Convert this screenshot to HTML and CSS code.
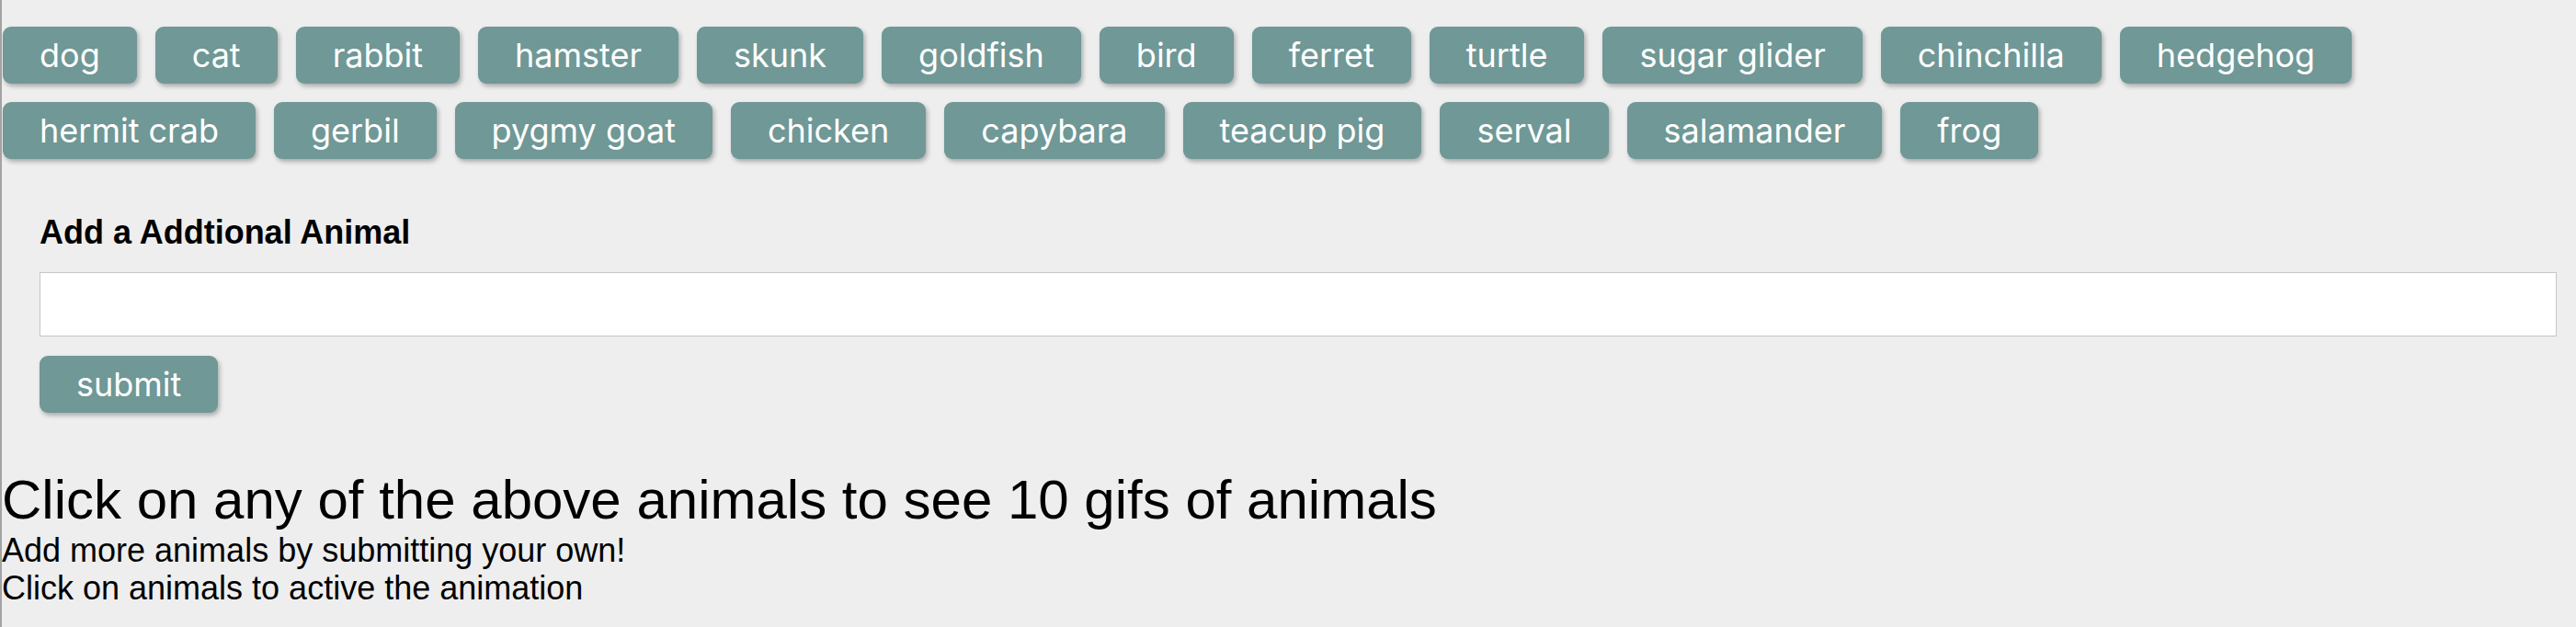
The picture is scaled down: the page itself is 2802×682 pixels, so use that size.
FILE: index.html
```html
<!DOCTYPE html>
<html lang="en">
<head>
<meta charset="utf-8">
<title>Animal Gifs</title>
<link rel="stylesheet" href="styles.css">
</head>
<body>
  <div class="animal-buttons">
    <button class="animal-btn">dog</button>
    <button class="animal-btn">cat</button>
    <button class="animal-btn">rabbit</button>
    <button class="animal-btn">hamster</button>
    <button class="animal-btn">skunk</button>
    <button class="animal-btn">goldfish</button>
    <button class="animal-btn">bird</button>
    <button class="animal-btn">ferret</button>
    <button class="animal-btn">turtle</button>
    <button class="animal-btn">sugar glider</button>
    <button class="animal-btn">chinchilla</button>
    <button class="animal-btn">hedgehog</button>
    <button class="animal-btn">hermit crab</button>
    <button class="animal-btn">gerbil</button>
    <button class="animal-btn">pygmy goat</button>
    <button class="animal-btn">chicken</button>
    <button class="animal-btn">capybara</button>
    <button class="animal-btn">teacup pig</button>
    <button class="animal-btn">serval</button>
    <button class="animal-btn">salamander</button>
    <button class="animal-btn">frog</button>
  </div>

  <form class="add-form">
    <label class="add-label" for="animal-input">Add a Addtional Animal</label>
    <input class="add-input" id="animal-input" type="text">
    <button class="animal-btn submit-btn" type="button">submit</button>
  </form>

  <h1 class="intro-title">Click on any of the above animals to see 10 gifs of animals</h1>
  <p class="intro-text">Add more animals by submitting your own!</p>
  <p class="intro-text">Click on animals to active the animation</p>
</body>
</html>
```

FILE: styles.css
```css
html, body {
  margin: 0;
  padding: 0;
}

body {
  background: #eeeeee;
  border-left: 2px solid #a3a3a3;
  min-height: 682px;
  box-sizing: border-box;
  font-family: "Liberation Sans", Arial, sans-serif;
  color: #000;
}

.animal-buttons {
  display: flex;
  flex-wrap: wrap;
  gap: 20px;
  padding: 29px 0 0 1px;
}

.animal-btn {
  font-family: Inter, "Noto Sans", sans-serif;
  font-size: 36px;
  line-height: 44px;
  color: #ffffff;
  background: #6f9896;
  border: none;
  border-radius: 9px;
  padding: 9px 40px;
  box-shadow: 2px 3px 5px rgba(0, 0, 0, 0.28);
  cursor: pointer;
}

.add-form {
  display: flex;
  flex-direction: column;
  align-items: flex-start;
  margin: 59px 21px 0 41px;
}

.add-label {
  font-weight: bold;
  font-size: 36px;
  line-height: 41px;
  margin-bottom: 23px;
}

.add-input {
  align-self: stretch;
  height: 70px;
  box-sizing: border-box;
  border: 1px solid #c6c6c6;
  background: #ffffff;
  margin: 0 0 21px 0;
  font-size: 36px;
}

.intro-title {
  font-weight: normal;
  font-size: 60px;
  line-height: 69px;
  margin: 60px 0 0 0;
}

.intro-text {
  font-size: 36px;
  line-height: 41px;
  margin: 0;
}
```
